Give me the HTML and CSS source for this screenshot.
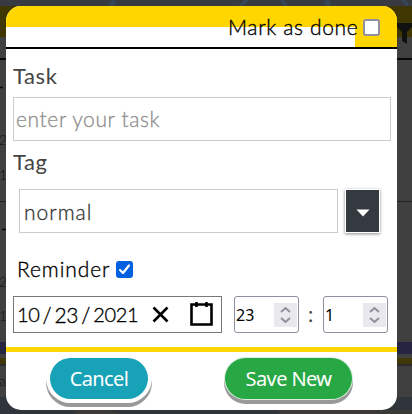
FILE: index.html
```html
<!DOCTYPE html>
<html lang="en">
<head>
<meta charset="utf-8">
<title>Task</title>
<link rel="stylesheet" href="styles.css">
</head>
<body>
<svg class="backdrop" width="412" height="414" viewBox="0 0 412 414" aria-hidden="true">
  <rect width="412" height="414" fill="#404040"/>
  <rect width="412" height="6" fill="#373a40"/>
  <path d="M108 6l4-6h4l-2 6zM244 0h5l-6 6h-5zM280 0h4l4 6h-4zM324 0h5l2 6h-5zM401 0h4l5 6h-4z" fill="#38465a"/>
  <rect y="6" width="412" height="31" fill="#403600"/>
  <rect y="58" width="412" height="2" fill="#080808"/>
  <path d="M397 23h15v4l-5 5v12l-5-3v-9l-5-5z" fill="#111"/>
  <path d="M0 87.500h3M2 229.500h4" stroke="#080808" stroke-width="1.500"/>
  <path d="M0 201.500h6M397 201.500h15" stroke="#222"/>
  <rect y="342" width="412" height="12" fill="#252541"/>
  <rect y="358" width="412" height="6" fill="#403808"/>
  <rect y="364" width="412" height="2" fill="#2c2c2c"/>
  <rect y="397" width="412" height="17" fill="#30353c"/>
  <path d="M74 410h36l10 4H76zM278 410h134v4H280z" fill="#3b3a36"/>
  <g class="backdrop-text"><text x="-1" y="145">2</text><text x="-1" y="180">1</text><text x="-1" y="287">2</text><text x="-1" y="321">1</text><text x="-1" y="386">a</text></g>
</svg>
<main class="dialog">
  <header class="header">
    <label class="done"><span class="done-text">Mark as done</span><span class="check"></span></label>
  </header>
  <section class="body">
    <div class="heading">Task</div>
    <div class="field task"><span>enter your task</span></div>
    <div class="heading tag-heading">Tag</div>
    <div class="tag-row">
      <div class="field tag"><span>normal</span></div>
      <button class="drop" aria-label="Choose tag"><svg width="14" height="8" viewBox="0 0 14 8"><path d="M.5.500h13L7 7.500z" fill="#fff"/></svg></button>
    </div>
    <label class="reminder"><span class="reminder-text">Reminder</span><span class="check checked"><svg width="17" height="17" viewBox="0 0 17 17"><path d="M4 9l3 3 6-7.500" fill="none" stroke="#fff" stroke-width="2.200" stroke-linecap="round" stroke-linejoin="round"/></svg></span></label>
    <div class="when">
      <div class="date">
        <span class="date-text"><i class="low">10</i><b>/</b><i>23</i><b>/</b><i class="low">2021</i></span>
        <svg class="clear" width="17" height="17" viewBox="0 0 17 17"><path d="M1.500 1.500l14 14M15.500 1.500l-14 14" stroke="#000" stroke-width="2.600"/></svg>
        <svg class="calendar" width="23" height="25" viewBox="0 0 23 25"><path d="M1.500 3.500h20v20h-20z" fill="none" stroke="#000" stroke-width="2.600"/><path d="M6.500 1v5M16.500 1v5" stroke="#000" stroke-width="2.600"/></svg>
      </div>
      <div class="number"><span>23</span><svg class="spin" width="23" height="24" viewBox="0 0 23 24"><path d="M7 9l4.500-4 4.500 4M7 15l4.500 4 4.500-4" fill="none" stroke="#8f8f9d" stroke-width="2"/></svg></div>
      <span class="colon">:</span>
      <div class="number"><span>1</span><svg class="spin" width="23" height="24" viewBox="0 0 23 24"><path d="M7 9l4.500-4 4.500 4M7 15l4.500 4 4.500-4" fill="none" stroke="#8f8f9d" stroke-width="2"/></svg></div>
    </div>
  </section>
  <footer class="footer">
    <button class="pill cancel"><span>Cancel</span></button>
    <button class="pill save"><span>Save New</span></button>
  </footer>
</main>
</body>
</html>
```
FILE: styles.css
```css
* { box-sizing: border-box; }
body { margin: 0; height: 414px; overflow: hidden; background: #404040; font-family: Lato, sans-serif; font-weight: 300; font-size: 21px; color: #000; }
svg { display: block; flex: none; }
button { border: 0; padding: 0; font: inherit; }
.backdrop { position: absolute; left: 0; top: 0; }
.backdrop-text { font-size: 14px; fill: #111; }
.dialog { position: relative; width: 391px; height: 404px; margin: 6px 0 0 6px; border-radius: 15px; background: #fff; overflow: hidden; display: flex; flex-direction: column; }
.header { height: 43px; border-bottom: 2px solid #000; background: linear-gradient(#ffd600, #ffd600) right / 42px 100% no-repeat, linear-gradient(#ffd600 21px, #fff 21px); display: flex; justify-content: flex-end; padding-right: 17px; }
.done { display: flex; align-items: center; height: 42px; }
.done-text { width: 135px; margin-top: -2px; white-space: nowrap; letter-spacing: .65px; -webkit-text-stroke: .35px #000; }
.check { width: 17px; height: 17px; border: 2px solid #8f8f9d; border-radius: 3px; background: #fff; }
.checked { border: 0; background: #0060df; }
.body { padding: 0 6px 0 7px; height: 298px; }
.heading { height: 48px; padding-top: 13px; line-height: 28px; color: #444; font-weight: 400; font-size: 22px; letter-spacing: .6px; }
.tag-heading { padding-top: 7px; }
.field { height: 44px; border: 1px solid #ccc; display: flex; align-items: center; white-space: nowrap; }
.task { padding: 0 0 2px 2px; color: #8d8d8d; letter-spacing: .6px; -webkit-text-stroke: .3px #8d8d8d; }
.tag-row { display: flex; margin-left: 6px; gap: 7px; }
.tag { width: 319px; padding: 0 0 0 4px; color: #333; letter-spacing: 1px; -webkit-text-stroke: .3px #333; }
.drop { width: 35px; height: 44px; border: 1px solid #fff; background: #343a40; box-shadow: 0 1px 3px #888; display: flex; align-items: center; justify-content: center; padding-top: 3px; }
.reminder { display: flex; align-items: center; height: 63px; padding: 10px 0 0 4px; }
.reminder-text { width: 99px; margin-top: -2px; letter-spacing: .9px; -webkit-text-stroke: .35px #000; }
.when { display: flex; height: 37px; }
.date { width: 209px; border: 1px solid #777; display: flex; align-items: center; padding-left: 3px; }
.date-text { width: 135px; margin-top: -1px; display: flex; align-items: center; letter-spacing: -.35px; -webkit-text-stroke: .35px #000; }
.date-text i { font-style: normal; }
.date-text b { font-weight: 300; width: 15px; text-align: center; }
.low { font-size: 20px; }
.calendar { margin: -2px 0 0 21px; }
.number { width: 65px; margin-left: 12px; border: 1px solid #8f8f9d; border-radius: 3px; display: flex; align-items: center; justify-content: space-between; padding: 0 1px; font: 16px "Noto Sans", sans-serif; }
.spin { background: #e9e9ed; }
.colon { width: 12px; padding: 5px 0 0 9px; color: #444; font-weight: 400; }
.footer { border-top: 5px solid #ffd600; height: 63px; display: flex; align-items: flex-start; padding: 6px 0 0 44px; }
.pill { height: 41px; border-radius: 21px; color: #fff; font: 20px "Noto Sans", sans-serif; letter-spacing: -.6px; white-space: nowrap; }
.cancel { width: 98px; background: #17a2b8; box-shadow: 0 0 0 4px #fff, 0 4px 0 4px #999; }
.save { width: 127px; margin-left: 77px; background: #28a745; box-shadow: 0 0 0 1px #d9eedd, 0 4px 0 1px #999; }
```
